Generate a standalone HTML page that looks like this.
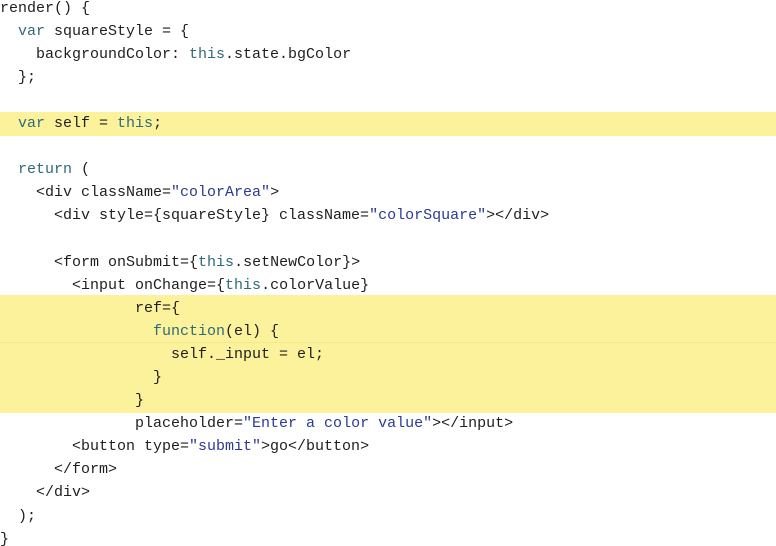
<!DOCTYPE html>
<html><head><style>
html,body{margin:0;padding:0;background:#fff;width:776px;height:546px;overflow:hidden;position:relative}
.hl{position:absolute;left:0;width:776px;background:#fcf29c}
pre{position:absolute;left:0;top:-3.5px;margin:0;font-family:"Liberation Mono","DejaVu Sans Mono",monospace;font-size:15px;line-height:23.1px;color:#1e1e1e}
.k{color:#2e6a78}.s{color:#2b3a94}
</style></head><body>
<div class="hl" style="top:112px;height:24px"></div>
<div class="hl" style="top:295px;height:118px"></div>
<div style="position:absolute;left:0;top:342px;width:776px;height:1px;background:#f2e88e"></div>
<pre>render() {
  <span class="k">var</span> squareStyle = {
    backgroundColor: <span class="k">this</span>.state.bgColor
  };

  <span class="k">var</span> self = <span class="k">this</span>;

  <span class="k">return</span> (
    &lt;div className=<span class="s">"colorArea"</span>&gt;
      &lt;div style={squareStyle} className=<span class="s">"colorSquare"</span>&gt;&lt;/div&gt;

      &lt;form onSubmit={<span class="k">this</span>.setNewColor}&gt;
        &lt;input onChange={<span class="k">this</span>.colorValue}
               ref={
                 <span class="k">function</span>(el) {
                   self._input = el;
                 }
               }
               placeholder=<span class="s">"Enter a color value"</span>&gt;&lt;/input&gt;
        &lt;button type=<span class="s">"submit"</span>&gt;go&lt;/button&gt;
      &lt;/form&gt;
    &lt;/div&gt;
  );
}</pre>
</body></html>
